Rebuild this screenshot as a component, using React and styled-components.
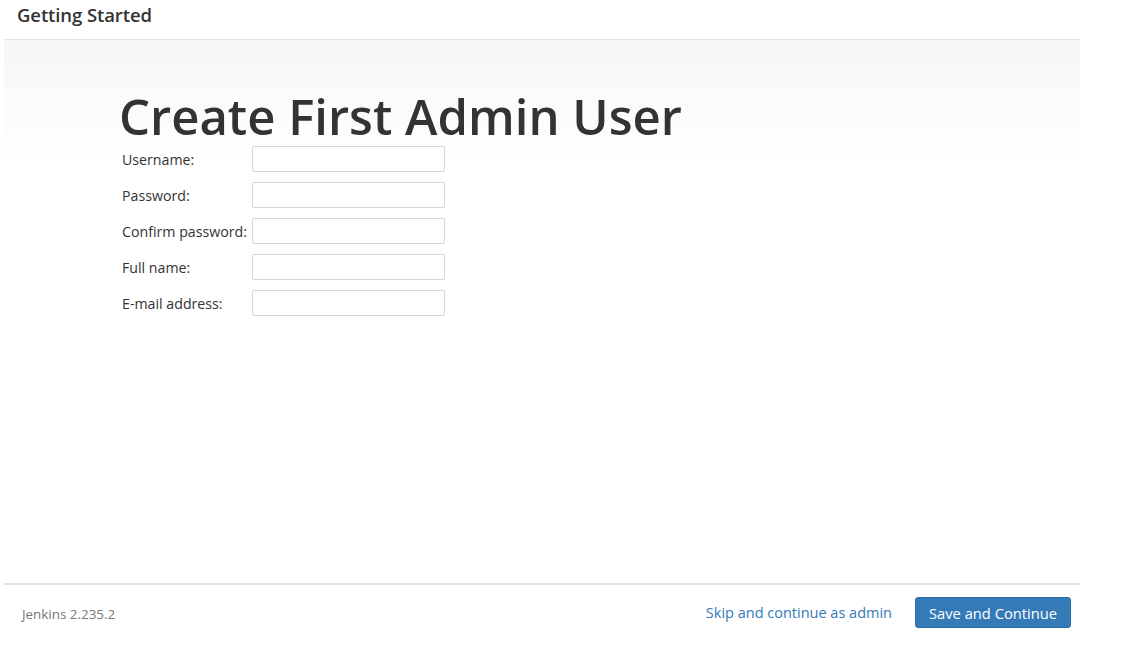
import React from "react";
import styled, { createGlobalStyle } from "styled-components";

const Global = createGlobalStyle`
  html, body { margin: 0; padding: 0; background: #fff; }
  body { font-family: "Open Sans", "Noto Sans", sans-serif; color: #333; }
  * { box-sizing: border-box; }
`;

const Panel = styled.div`
  width: 1076px;
  margin-left: 4px;
  height: 640px;
  display: flex;
  flex-direction: column;
`;

const Header = styled.div`
  height: 40px;
  border-bottom: 1px solid #e5e5e5;
  display: flex;
  align-items: center;
  padding: 0 0 10px 13px;
`;

const HeaderTitle = styled.h1`
  margin: 0;
  font-size: 18.5px;
  font-weight: 600;
  color: #333;
  letter-spacing: -0.1px;
`;

const Body = styled.div`
  flex: 1;
  background: linear-gradient(to bottom, #f6f6f6 0px, #fafafa 50px, #ffffff 125px);
  padding: 48px 0 0 115px;
`;

const Title = styled.h2`
  margin: 0 0 2px 0;
  font-size: 49px;
  font-weight: 600;
  color: #333;
  line-height: 56px;
  letter-spacing: 0;
`;

const Form = styled.div`
  display: grid;
  grid-template-columns: 130px 193px;
  row-gap: 10px;
  padding-left: 3px;
`;

const Label = styled.label`
  font-size: 14.2px;
  color: #333;
  display: flex;
  align-items: center;
  height: 26px;
  white-space: nowrap;
`;

const Input = styled.input`
  height: 26px;
  width: 193px;
  border: 1px solid #d6d6d6;
  border-radius: 2px;
  background: #fff;
  padding: 2px 6px;
  font-size: 13px;
  outline: none;
`;

const Footer = styled.div`
  height: 57px;
  border-top: 2px solid #e0e0e0;
  display: flex;
  align-items: center;
  padding: 0 9px 0 18px;
`;

const Version = styled.span`
  font-size: 13.4px;
  color: #777;
  flex: 1;
  margin-top: 3px;
`;

const SkipLink = styled.a`
  font-size: 14.5px;
  color: #337ab7;
  text-decoration: none;
  margin-right: 23px;
  cursor: pointer;
`;

const PrimaryButton = styled.button`
  height: 31px;
  width: 156px;
  border: 1px solid #2e6da4;
  border-radius: 3px;
  background: #337ab7;
  color: #fff;
  font-family: inherit;
  font-size: 14.7px;
  cursor: pointer;
  padding: 0;
`;

const fields = ["Username:", "Password:", "Confirm password:", "Full name:", "E-mail address:"];

export default function App() {
  return (
    <>
      <Global />
      <Panel>
        <Header>
          <HeaderTitle>Getting Started</HeaderTitle>
        </Header>
        <Body>
          <Title>Create First Admin User</Title>
          <Form>
            {fields.map((f) => (
              <React.Fragment key={f}>
                <Label>{f}</Label>
                <Input type={f.startsWith("Pass") || f.startsWith("Confirm") ? "password" : "text"} />
              </React.Fragment>
            ))}
          </Form>
        </Body>
        <Footer>
          <Version>Jenkins 2.235.2</Version>
          <SkipLink>Skip and continue as admin</SkipLink>
          <PrimaryButton>Save and Continue</PrimaryButton>
        </Footer>
      </Panel>
    </>
  );
}
